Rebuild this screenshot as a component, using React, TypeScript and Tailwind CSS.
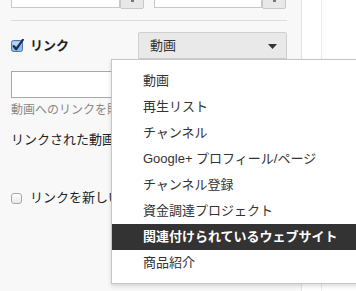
import React from "react";

const font = { fontFamily: '"Liberation Sans", "Noto Sans CJK JP", sans-serif' };

const options = [
  "動画",
  "再生リスト",
  "チャンネル",
  "Google+ プロフィール/ページ",
  "チャンネル登録",
  "資金調達プロジェクト",
  "関連付けられているウェブサイト",
  "商品紹介",
];

function CheckedBox() {
  return (
    <svg width="14" height="14" viewBox="0 0 14 14" className="shrink-0">
      <rect x="0.5" y="1.5" width="11" height="11" rx="2" fill="#8db8ea" stroke="#4a78b8" />
      <rect x="1.5" y="2.5" width="9" height="4" rx="1" fill="#b9d4f3" />
      <path d="M2.8 7.2 L5.2 10.2 L11.8 0.8" fill="none" stroke="#1c2c4c" strokeWidth="2.2" strokeLinecap="round" strokeLinejoin="round" />
    </svg>
  );
}

function SpinButton() {
  return (
    <div className="relative w-[24px] h-[29px] bg-[#e8e8e8] border border-[#c8c8c8] rounded-b-[2px]">
      <div className="absolute left-[10px] top-[19px] w-[3px] h-[2px] bg-[#777]" />
    </div>
  );
}

export default function App() {
  return (
    <div className="relative w-[356px] h-[291px] overflow-hidden bg-white text-[#222]" style={font}>
      <div className="flex h-full">
        {/* settings panel */}
        <div className="w-[302px] h-full bg-[#f8f8f8] border-r border-[#e4e4e4] pl-[11px] overflow-hidden">
          <div className="flex items-start -mt-[20px]">
            <div className="w-[109px] h-[28px] bg-white border border-[#c8c8c8]" />
            <SpinButton />
            <div className="w-[108px] h-[28px] ml-[10px] bg-white border border-[#c8c8c8]" />
            <SpinButton />
          </div>

          <div className="mt-[11px] w-[276px] h-px bg-[#dcdcdc]" />

          <div className="mt-[11px] flex items-center h-[27px]">
            <div className="flex items-center gap-[5px] w-[127px]">
              <CheckedBox />
              <span className="text-[13px] font-bold leading-none">リンク</span>
            </div>
            <div className="relative w-[149px] h-[27px] bg-[#e9e9e9] border border-[#cfcfcf] rounded-t-[2px] flex items-center pl-[11px]">
              <span className="text-[13px] text-[#333]">動画</span>
              <svg width="9" height="5" viewBox="0 0 9 5" className="absolute right-[9px] top-[11px]">
                <path d="M0 0 L9 0 L4.5 5 Z" fill="#333" />
              </svg>
            </div>
          </div>

          <div className="mt-[12px] w-[276px] h-[27px] bg-white border border-[#a8a8a8]" />

          {/* texts below are hidden behind the open menu past x=111 */}
          <div className="mt-[4px] w-[100px] overflow-hidden text-[12px] leading-[16px] text-[#888] whitespace-nowrap">
            動画へのリンクを貼り付けてください
          </div>

          <div className="mt-[13px] w-[100px] overflow-hidden text-[13px] leading-[18px] text-[#222] whitespace-nowrap">
            リンクされた動画の再生を開始する時間
          </div>

          <div className="mt-[40px] flex items-center gap-[8px] h-[18px] w-[100px] overflow-hidden">
            <div className="shrink-0 w-[11px] h-[11px] rounded-[3px] border border-[#a9a9a9] bg-gradient-to-b from-white to-[#e8e8e8]" />
            <span className="text-[13px] leading-[18px] whitespace-nowrap">リンクを新しいウィンドウで開く</span>
          </div>
        </div>

        <div className="w-[20px] h-full border-r border-[#ececec]" />
        <div className="flex-1" />
      </div>

      {/* open dropdown menu */}
      <div className="absolute left-[111px] top-[59px] w-[270px] h-[225px] bg-white border border-[#c6c6c6] shadow-[0_2px_4px_rgba(0,0,0,0.15)] pt-[8px]">
        {options.map((o, i) => (
          <div
            key={o}
            className={
              i === 6
                ? "h-[26px] flex items-center pl-[31px] bg-[#333] text-white font-bold text-[13px] whitespace-nowrap"
                : "h-[26px] flex items-center pl-[31px] text-[#333] text-[13px] whitespace-nowrap"
            }
          >
            {o}
          </div>
        ))}
      </div>
    </div>
  );
}
